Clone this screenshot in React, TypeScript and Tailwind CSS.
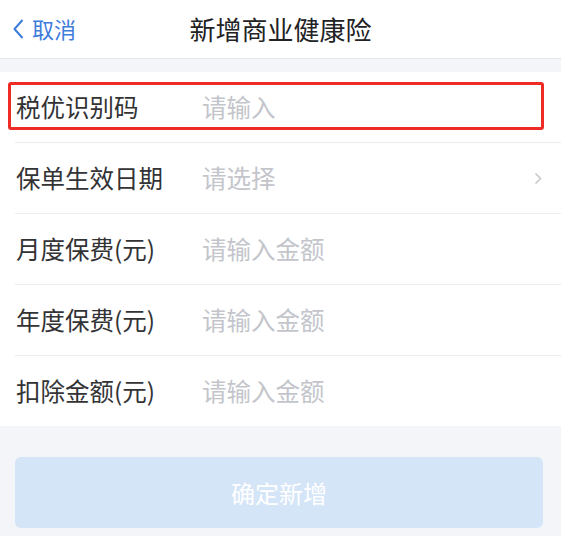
interface Field {
  label: string;
  placeholder: string;
  arrow?: boolean;
  highlight?: boolean;
}

const fields: Field[] = [
  { label: '税优识别码', placeholder: '请输入', highlight: true },
  { label: '保单生效日期', placeholder: '请选择', arrow: true },
  { label: '月度保费(元)', placeholder: '请输入金额' },
  { label: '年度保费(元)', placeholder: '请输入金额' },
  { label: '扣除金额(元)', placeholder: '请输入金额' },
];

const font = { fontFamily: '"Noto Sans CJK SC", "Noto Sans", sans-serif' };

function Row({ field, first }: { field: Field; first: boolean }) {
  return (
    <div className={first ? '' : 'ml-[15px] border-t border-[#ececef]'}>
      <div className={`relative flex h-[70px] items-center pr-[18px] ${first ? 'pl-[16px]' : 'pl-[1px]'}`}>
        <span className="w-[186px] shrink-0 text-[24.5px] text-[#333336]">{field.label}</span>
        <span className="flex-1 text-[24.5px] text-[#c3c5cb]">{field.placeholder}</span>
        {field.arrow && (
          <svg width="8" height="13" viewBox="0 0 8 13" className="mr-[1px]">
            <polyline points="1.5,1.5 6.5,6.5 1.5,11.5" fill="none" stroke="#c7c8cc" strokeWidth="1.6" />
          </svg>
        )}
        {field.highlight && (
          <div className="absolute left-[8px] top-[10px] h-[48px] w-[536px] rounded-[3px] border-[3px] border-[#ef2b25]" />
        )}
      </div>
    </div>
  );
}

export default function App() {
  return (
    <div className="h-[536px] w-[561px] overflow-hidden bg-[#f4f5f9]" style={font}>
      {/* header */}
      <div className="relative flex h-[59px] items-center justify-center border-b border-[#e6e7eb] bg-white">
        <button className="absolute left-[13px] top-[12px] flex items-center gap-[8px] text-[22px] text-[#3d7cdb]">
          <svg width="11" height="20" viewBox="0 0 11 20">
            <polyline points="9.5,1 1.5,10 9.5,19" fill="none" stroke="#3d7cdb" strokeWidth="2" strokeLinejoin="round" />
          </svg>
          <span>取消</span>
        </button>
        <h1 className="-mt-[2px] text-[26px] text-[#222224]">新增商业健康险</h1>
      </div>

      <div className="mt-[13px] bg-white">
        {fields.map((f, i) => (
          <Row key={f.label} field={f} first={i === 0} />
        ))}
      </div>

      <div className="pl-[15px] pr-[18px] pt-[31px]">
        <button className="flex h-[71px] w-full items-center justify-center rounded-[6px] bg-[#d5e5f8] text-[24px] text-white">
          确定新增
        </button>
      </div>
    </div>
  );
}
